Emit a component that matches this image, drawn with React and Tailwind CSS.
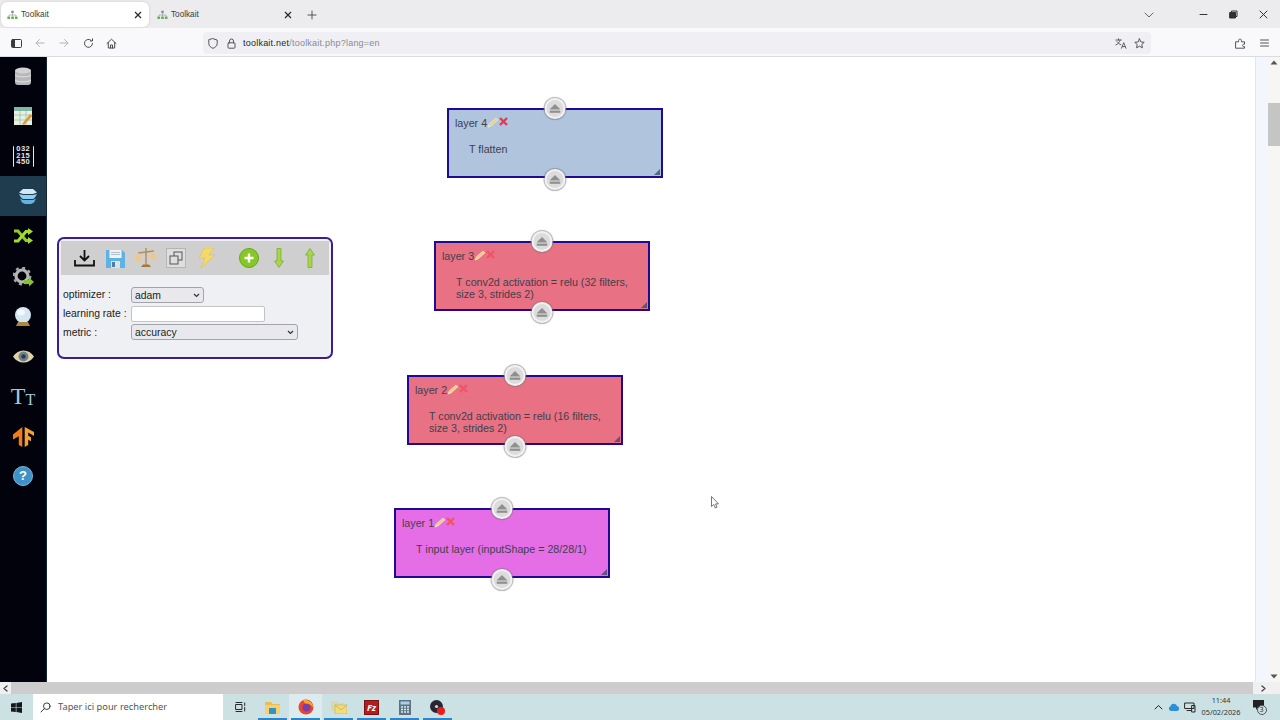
import React from "react";

const arial = "font-['Liberation_Sans',Arial,sans-serif]";

function Favicon() {
  return (
    <svg width="11" height="10" viewBox="0 0 14 12" className="shrink-0">
      <rect x="5.5" y="0.5" width="3" height="3" fill="#7c8f9c" />
      <path d="M7 3.5V6M2.5 8V6H11.5V8M7 6V8" stroke="#8a9a8a" strokeWidth="0.8" fill="none" />
      <rect x="0.5" y="8" width="3.4" height="3" fill="#5fae4f" />
      <rect x="5.3" y="8" width="3.4" height="3" fill="#5fae4f" />
      <rect x="10" y="8" width="3.4" height="3" fill="#5fae4f" />
    </svg>
  );
}

function Tab({ active, close }) {
  return (
    <div className={`h-[25px] flex items-center rounded-md pl-[6px] ${close} ${active ? "w-[148px] bg-white shadow-[0_0_3px_rgba(0,0,0,0.15)]" : "w-[148px]"}`}>
      <Favicon />
      <span className="ml-[3px] pt-[2px] text-[8.2px] text-[#3b3b40]">Toolkait</span>
      <svg width="8" height="8" viewBox="0 0 8 8" className="ml-auto mr-[7px]">
        <path d="M1 1L7 7M7 1L1 7" stroke="#26262b" strokeWidth="1.2" />
      </svg>
    </div>
  );
}

const Stroke = ({ w = 14, h = 14, vb = "0 0 14 14", c = "#4a4a50", sw = 1, children }) => (
  <svg width={w} height={h} viewBox={vb} fill="none" stroke={c} strokeWidth={sw} strokeLinecap="round" strokeLinejoin="round" className="shrink-0">
    {children}
  </svg>
);

function TabStrip() {
  return (
    <div className="h-[28px] bg-[#ececee] flex items-center pl-[1px] pt-[1px]">
      <Tab active close="" />
      <Tab close="ml-[2px]" />
      <div className="ml-[8px]">
        <Stroke w={10} h={10} vb="0 0 10 10" c="#55555a"><path d="M5 1V9M1 5H9" /></Stroke>
      </div>
      <div className="ml-auto flex items-center">
        <Stroke w={10} h={6} vb="0 0 10 6" c="#66666c"><path d="M1 1L5 5L9 1" /></Stroke>
        <div className="ml-[45px]"><Stroke w={9} h={9} vb="0 0 9 9" c="#333338"><path d="M1 4.5H8" /></Stroke></div>
        <div className="ml-[21px]">
          <Stroke w={9} h={9} vb="0 0 9 9" c="#2f2f34"><path d="M2.5 2.5V1H8V6.5H6.5" /><rect x="1" y="2.5" width="5.5" height="5.5" fill="#2f2f34" /></Stroke>
        </div>
        <div className="ml-[21px] mr-[12px]"><Stroke w={9} h={9} vb="0 0 9 9" c="#2f2f34"><path d="M1 1L8 8M8 1L1 8" /></Stroke></div>
      </div>
    </div>
  );
}

function Toolbar() {
  return (
    <div className="h-[29px] bg-[#f9f9fb] flex items-center border-b border-[#dcdce0] shrink-0 pt-[2px]">
      <div className="ml-[11px]">
        <Stroke w={11} h={9} vb="0 0 11 9" c="#3a3a40"><rect x="0.5" y="0.5" width="10" height="8" rx="1" /><rect x="1" y="1" width="3" height="7" fill="#3a3a40" stroke="none" /></Stroke>
      </div>
      <div className="ml-[13px]"><Stroke w={10} h={10} vb="0 0 10 10" c="#b4b4b9"><path d="M9 5H1M4.5 1.5L1 5L4.5 8.5" /></Stroke></div>
      <div className="ml-[14px]"><Stroke w={10} h={10} vb="0 0 10 10" c="#b4b4b9"><path d="M1 5H9M5.5 1.5L9 5L5.5 8.5" /></Stroke></div>
      <div className="ml-[14px]"><Stroke w={11} h={11} vb="0 0 11 11" c="#4a4a50"><path d="M9.5 5.5A4 4 0 1 1 8 2.2M9.5 0.8V3H7.3" /></Stroke></div>
      <div className="ml-[12px]"><Stroke w={11} h={11} vb="0 0 11 11" c="#4a4a50"><path d="M1 5.5L5.5 1.2L10 5.5M2.3 4.5V10H8.7V4.5M4.5 10V7H6.5V10" /></Stroke></div>
      <div className="ml-[86px] w-[948px] h-[22px] bg-[#f0f0f4] rounded-[4px] flex items-center pl-[5px]">
        <Stroke w={10} h={11} vb="0 0 10 11" c="#55555a"><path d="M5 0.7L9.2 2V5.5C9.2 8 7 9.6 5 10.3C3 9.6 0.8 8 0.8 5.5V2Z" /></Stroke>
        <div className="ml-[9px]">
          <Stroke w={9} h={11} vb="0 0 9 11" c="#55555a"><rect x="1" y="4.8" width="7" height="5.4" rx="0.8" /><path d="M2.5 4.8V3A2 2 0 0 1 6.5 3V4.8" /></Stroke>
        </div>
        <span className="ml-[7px] pt-[1px] text-[9px] text-[#1f1f24] tracking-[0.025em]">toolkait.net<span className="text-[#8a8a90]">/toolkait.php?lang=en</span></span>
        <div className="ml-auto flex items-center mr-[6px]">
          <Stroke w={12} h={11} vb="0 0 12 11" c="#55555a" sw={0.9}><path d="M0.8 2H6.2M3.5 0.7V2M5.2 2C4.8 4 3 6 0.8 7M2 3.6C3 5.2 4.4 6.2 5.8 6.7M6.5 10.3L8.7 4.7L10.9 10.3M7.3 8.6H10.1" /></Stroke>
          <div className="ml-[7px]"><Stroke w={11} h={11} vb="0 0 11 11" c="#55555a"><path d="M5.5 0.9L6.9 3.9L10.2 4.3L7.8 6.5L8.4 9.8L5.5 8.2L2.6 9.8L3.2 6.5L0.8 4.3L4.1 3.9Z" /></Stroke></div>
        </div>
      </div>
      <div className="ml-[84px]"><Stroke w={11} h={11} vb="0 0 11 11" c="#55555a"><path d="M1 3.8H3.6C3.4 2 4 1 5 1S6.6 2 6.4 3.8H9.5V6.2C8.2 6 7.6 6.6 7.6 7.4S8.2 8.8 9.5 8.6V10.2H1Z" /></Stroke></div>
      <div className="ml-[14px]"><Stroke w={9} h={8} vb="0 0 9 8" c="#55555a"><path d="M0.5 1H8.5M0.5 4H8.5M0.5 7H8.5" /></Stroke></div>
    </div>
  );
}

function SideIcon({ children, active, nudge }) {
  return <div className={`h-[40px] flex items-center justify-center ${active ? "bg-[#1e3c4d]" : ""} ${nudge ? "pt-[2px]" : ""}`}>{children}</div>;
}

function MatrixIcon() {
  return (
    <div className="relative w-[21px] h-[21px] border-x-[1.5px] border-[#e8e8e8] rounded-[1px] flex items-center justify-center">
      <div className="grid grid-cols-3 gap-x-[0.5px] text-[7.5px] leading-[6.8px] font-bold text-[#e6e6e6] text-center">
        <span>0</span><span>3</span><span>2</span>
        <span>2</span><span>1</span><span>5</span>
        <span>4</span><span>5</span><span>0</span>
      </div>
    </div>
  );
}

function Sidebar() {
  return (
    <div className="w-[47px] shrink-0 bg-[#02020c] flex flex-col border-r border-[#16263a] overflow-hidden">
      <div className="-mt-[1px] flex flex-col">
        <SideIcon nudge>
          <svg width="16" height="20" viewBox="0 0 16 20">
            <rect x="0" y="2" width="16" height="16" rx="3" fill="#b8b8bb" />
            <ellipse cx="8" cy="3.5" rx="8" ry="3" fill="#d2d2d4" />
            <path d="M0 8C3 10.5 13 10.5 16 8M0 13C3 15.5 13 15.5 16 13" stroke="#e4e4e6" fill="none" />
          </svg>
        </SideIcon>
        <SideIcon>
          <svg width="19" height="19" viewBox="0 0 19 19">
            <rect x="0" y="0" width="18" height="18" fill="#e8f1df" />
            <rect x="0" y="0" width="18" height="4" fill="#7fb7a6" />
            <path d="M0 8H18M0 13H18M6 4V18M12 4V18" stroke="#9cc2b4" strokeWidth="0.8" />
            <path d="M8 17L16 7L18.5 9L10 18Z" fill="#dc9a3c" />
          </svg>
        </SideIcon>
        <SideIcon><MatrixIcon /></SideIcon>
        <SideIcon active>
          <svg width="20" height="15" viewBox="0 0 20 15" className="ml-[10px]">
            <path d="M5 0H15L19 3.5L15 5H5L1 3.5Z" fill="#cfe9f8" />
            <path d="M1 5L5 6H15L19 5L17 8.5L15 10H5L3 8.5Z" fill="#92cdf0" />
            <path d="M2 9.5L5 11H15L18 9.5L16 13.5L13 15H7L4 13.5Z" fill="#66b1e4" />
          </svg>
        </SideIcon>
        <SideIcon>
          <svg width="20" height="16" viewBox="0 0 20 16" fill="none">
            <path d="M1 3H5L13 12.5H16" stroke="#8fce20" strokeWidth="3" />
            <path d="M1 13H5L13 3.5H16" stroke="#a4dc2e" strokeWidth="3" />
            <path d="M15 0L20 3.5L15 7ZM15 9L20 12.5L15 16Z" fill="#a4dc2e" />
          </svg>
        </SideIcon>
        <SideIcon nudge>
          <svg width="21" height="20" viewBox="0 0 21 20">
            <circle cx="9" cy="9" r="6" fill="none" stroke="#b5b5b5" strokeWidth="3.2" />
            <circle cx="9" cy="9" r="8.3" fill="none" stroke="#a8a8a8" strokeWidth="2.2" strokeDasharray="3 3.5" />
            <path d="M11 13H16V10.5L21 15L16 19.5V17H11Z" fill="#86c232" />
          </svg>
        </SideIcon>
        <SideIcon nudge>
          <svg width="18" height="20" viewBox="0 0 18 20">
            <circle cx="9" cy="8" r="8" fill="#d5e5f2" />
            <ellipse cx="7" cy="5.5" rx="4" ry="3" fill="#f3f8fc" />
            <path d="M4 15H14L16 19H2Z" fill="#a98a45" />
          </svg>
        </SideIcon>
        <SideIcon>
          <svg width="21" height="13" viewBox="0 0 21 13">
            <path d="M0 6.5C5 -1.5 16 -1.5 21 6.5C16 14.5 5 14.5 0 6.5Z" fill="#e3d3a4" />
            <circle cx="10.5" cy="6.5" r="5" fill="#6d8490" />
            <circle cx="10.5" cy="6.5" r="2.2" fill="#2f3b44" />
          </svg>
        </SideIcon>
        <SideIcon>
          <span className="font-['Liberation_Serif',serif] text-[#9fcadb] leading-none flex items-end">
            <span className="text-[24px]">T</span><span className="text-[16px]">T</span>
          </span>
        </SideIcon>
        <SideIcon nudge>
          <svg width="21" height="20" viewBox="0 0 21 20">
            <path d="M9.3 0V20L5.8 18V9.2L0 12.5V7.5Z" fill="#ee7c18" />
            <path d="M11.7 0V20L15.2 18V12.7L18 14.3V10.3L15.2 8.7V5.6L21 9V5Z" fill="#f5a030" />
          </svg>
        </SideIcon>
        <SideIcon>
          <div className="w-[20px] h-[20px] rounded-full bg-[#3f92c8] border border-[#7bb8dd] flex items-center justify-center text-white text-[13px] font-bold">?</div>
        </SideIcon>
      </div>
    </div>
  );
}

function Handle({ className }) {
  return (
    <div className={`absolute left-1/2 -translate-x-1/2 w-[21px] h-[21px] rounded-full bg-[#dcdcdc] border-2 border-[#f2f2f2] shadow-[0_0_1px_1px_rgba(120,120,120,0.55)] flex items-center justify-center ${className}`}>
      <svg width="11" height="9" viewBox="0 0 11 9">
        <path d="M5.5 0L11 5.5H0Z" fill="#8f8f8f" />
        <rect x="0" y="6.6" width="11" height="2.2" fill="#8f8f8f" />
      </svg>
    </div>
  );
}

function Layer({ name, text, bg, left, top, red }) {
  return (
    <div className={`absolute w-[216px] h-[70px] border-2 border-[#1f0a96] ${bg} text-[#40404c] text-[10.7px] leading-[12px]`} style={{ left, top }}>
      <div className="flex items-center pl-[6px] pt-[4.5px] h-[21px]">
        <span>{name}</span>
        <svg width="12" height="11" viewBox="0 0 12 11" className="-ml-[0.5px]">
          <path d="M1 10L2.2 7L9 1L11 2.8L4 9Z" fill="#ead27a" stroke="#fff" strokeWidth="0.5" />
        </svg>
        <svg width="9" height="9" viewBox="0 0 9 9" className="ml-[0.5px] -mt-[2px]">
          <path d="M1 1L8 8M8 1L1 8" stroke={red} strokeWidth="2.4" />
        </svg>
      </div>
      <div className="pl-[20px] pr-[20px] mt-[12px]">{text}</div>
      <svg width="6" height="6" viewBox="0 0 6 6" className="absolute right-[1px] bottom-[1px]">
        <path d="M6 0V6H0Z" fill="#3b4a5a" opacity="0.75" />
      </svg>
      <Handle className="-top-[12px]" />
      <Handle className="-bottom-[14px]" />
    </div>
  );
}

function ToolIcon({ children, className = "" }) {
  return <div className={`w-[30.7px] flex justify-center ${className}`}>{children}</div>;
}

function Chevron() {
  return (
    <svg width="7" height="5" viewBox="0 0 7 5" fill="none" stroke="#333" strokeWidth="1.2" className="absolute right-[4px] top-[6px] pointer-events-none">
      <path d="M1 1L3.5 3.5L6 1" />
    </svg>
  );
}

function Panel() {
  return (
    <div className="absolute left-[10px] top-[180px] w-[276px] h-[122px] rounded-[7px] border-2 border-[#3a1f8c] bg-[#eff0f3] p-[2px] text-[10.4px] text-[#222]">
      <div className="h-[34px] bg-[#cfcfcf] flex items-center pl-[8px]">
        <ToolIcon>
          <svg width="21" height="18" viewBox="0 0 21 18" fill="none" stroke="#111" strokeWidth="1.8">
            <path d="M10.5 1V11M6 7L10.5 11.5L15 7M1 11V16.5H20V11" />
          </svg>
        </ToolIcon>
        <ToolIcon>
          <svg width="19" height="19" viewBox="0 0 19 19">
            <path d="M0 1H16L19 4V19H0Z" fill="#5fb2e4" />
            <rect x="3.5" y="1" width="12" height="8" fill="#eef3f6" />
            <path d="M5 3.5H14M5 5.5H14" stroke="#a0b0bb" strokeWidth="0.8" />
            <rect x="5" y="12" width="9" height="7" fill="#d9e2e8" />
            <rect x="6" y="13" width="3" height="5" fill="#4b7fa6" />
          </svg>
        </ToolIcon>
        <ToolIcon>
          <svg width="22" height="20" viewBox="0 0 22 20" fill="none">
            <path d="M11 0V17M3 5L19 3" stroke="#b58e52" strokeWidth="1.4" />
            <path d="M0 11L3.5 5L7 11C6 14 1 14 0 11ZM15 9.5L18.5 3.5L22 9.5C21 12.5 16 12.5 15 9.5Z" fill="#edc989" />
            <path d="M6 19H16L14 16.5H8Z" fill="#a8763c" />
          </svg>
        </ToolIcon>
        <ToolIcon>
          <div className="w-[20px] h-[20px] bg-[#dedede] border border-[#b5b5b5] flex items-center justify-center">
            <svg width="14" height="14" viewBox="0 0 14 14" fill="none" stroke="#555" strokeWidth="1">
              <rect x="5" y="1" width="8" height="8" />
              <rect x="1" y="5" width="8" height="8" fill="#dedede" />
            </svg>
          </div>
        </ToolIcon>
        <ToolIcon>
          <svg width="16" height="20" viewBox="0 0 16 20">
            <path d="M5 0H15L10 7H16L2 20L6 10H0Z" fill="#f3d968" stroke="#e0b94a" strokeWidth="0.5" />
          </svg>
        </ToolIcon>
        <ToolIcon className="ml-[11px]">
          <div className="w-[20px] h-[20px] rounded-full bg-[#86c926] border border-[#6aa518] flex items-center justify-center">
            <svg width="10" height="10" viewBox="0 0 10 10"><path d="M5 0.5V9.5M0.5 5H9.5" stroke="#fff" strokeWidth="2.4" /></svg>
          </div>
        </ToolIcon>
        <ToolIcon>
          <svg width="10" height="20" viewBox="0 0 10 20"><path d="M3 0.5H7V13H9.5L5 19.5L0.5 13H3Z" fill="#a8d64a" stroke="#74a82a" strokeWidth="0.7" /></svg>
        </ToolIcon>
        <ToolIcon>
          <svg width="10" height="20" viewBox="0 0 10 20"><path d="M3 19.5H7V7H9.5L5 0.5L0.5 7H3Z" fill="#a8d64a" stroke="#74a82a" strokeWidth="0.7" /></svg>
        </ToolIcon>
      </div>
      <div className="grid grid-cols-[68px_auto] justify-start items-center gap-y-[2.7px] pl-[2px] pt-[12px]">
        <span>optimizer :</span>
        <div className="relative w-[73px] h-[16px]">
          <select defaultValue="adam" className="appearance-none w-full h-full bg-[#e9e9ed] border border-[#a3a3ad] rounded-[3px] text-[10.4px] pl-[3px] text-[#222]">
            <option>adam</option>
          </select>
          <Chevron />
        </div>
        <span>learning rate :</span>
        <input className="w-[134px] h-[16px] bg-white border border-[#c4c4c4] rounded-[2px]" />
        <span>metric :</span>
        <div className="relative w-[167px] h-[16px]">
          <select defaultValue="accuracy" className="appearance-none w-full h-full bg-[#e9e9ed] border border-[#a3a3ad] rounded-[3px] text-[10.4px] pl-[3px] text-[#222]">
            <option>accuracy</option>
          </select>
          <Chevron />
        </div>
      </div>
    </div>
  );
}

function Cursor() {
  return (
    <svg width="8" height="13" viewBox="0 0 8 13" className="absolute left-[664px] top-[439px]">
      <path d="M0.5 0.5V10.5L2.8 8.5L4.3 12L6 11.2L4.5 7.9H7.5Z" fill="#fff" stroke="#555" strokeWidth="0.8" />
    </svg>
  );
}

function Canvas() {
  return (
    <div className="relative flex-1 bg-white overflow-hidden">
      <Panel />
      <Layer name="layer 4" text="T flatten" bg="bg-[#b0c4de]" left={400} top={51} red="#e8384f" />
      <Layer name="layer 3" text="T conv2d activation = relu (32 filters, size 3, strides 2)" bg="bg-[#e87183]" left={387} top={184} red="#ee5568" />
      <Layer name="layer 2" text="T conv2d activation = relu (16 filters, size 3, strides 2)" bg="bg-[#e87183]" left={360} top={318} red="#ee5568" />
      <Layer name="layer 1" text="T input layer (inputShape = 28/28/1)" bg="bg-[#e56ee6]" left={347} top={451} red="#ee5568" />
      <Cursor />
    </div>
  );
}

function VScroll() {
  return (
    <div className="w-[25px] shrink-0 flex border-l border-[#e3e5e8] bg-white">
      <div className="w-[12px] bg-[#f3f6fc]"></div>
      <div className="flex-1 bg-[#f7f6f3] flex flex-col items-center pt-[3px] pb-[3px]">
        <svg width="8" height="5" viewBox="0 0 8 5"><path d="M4 0.5L7.5 4.5H0.5Z" fill="#555" /></svg>
        <div className="w-full h-[43px] bg-[#c5c6c3] mt-[38px]"></div>
        <svg width="8" height="5" viewBox="0 0 8 5" className="mt-auto"><path d="M4 4.5L7.5 0.5H0.5Z" fill="#555" /></svg>
      </div>
    </div>
  );
}

function HScroll() {
  return (
    <div className="h-[12px] bg-[#cdcdcd] flex items-center justify-between shrink-0">
      <div className="w-[11px] h-[12px] bg-[#f0f0f0] flex items-center justify-center">
        <Stroke w={5} h={7} vb="0 0 5 7" c="#444" sw={1.3}><path d="M4 1L1 3.5L4 6" /></Stroke>
      </div>
      <div className="w-[27px] h-[12px] bg-[#f0f0f0] flex items-center justify-start pl-[8px]">
        <Stroke w={5} h={7} vb="0 0 5 7" c="#444" sw={1.3}><path d="M1 1L4 3.5L1 6" /></Stroke>
      </div>
    </div>
  );
}

function TaskItem({ children, active, open = true }) {
  return (
    <div className={`relative w-[33px] h-[26px] flex items-center justify-center ${active ? "bg-[#dcebed]" : ""}`}>
      {children}
      {open && <div className="absolute bottom-0 left-[2px] right-[2px] h-[2px] bg-[#2a86c8]"></div>}
    </div>
  );
}

function Taskbar() {
  return (
    <div className="h-[26px] bg-[#cbe1e4] flex items-center shrink-0 font-['Noto_Sans','Open_Sans',sans-serif]">
      <div className="w-[33px] flex justify-center pr-[1px]">
        <svg width="11" height="11" viewBox="0 0 11 11"><path d="M0 1.6L4.8 1V5.2H0ZM5.4 0.9L11 0V5.2H5.4ZM0 5.8H4.8V10L0 9.4ZM5.4 5.8H11V11L5.4 10.1Z" fill="#14181c" /></svg>
      </div>
      <div className="w-[190px] h-[26px] bg-white flex items-center pl-[7px]">
        <Stroke w={11} h={11} vb="0 0 11 11" c="#3a3a3a"><circle cx="6.8" cy="4.2" r="3.3" /><path d="M4.4 6.6L1 10" /></Stroke>
        <span className="ml-[7px] text-[9.3px] text-[#555]">Taper ici pour rechercher</span>
      </div>
      <div className="ml-[6px] w-[22px] flex justify-center -mr-[1px]">
        <Stroke w={11} h={10} vb="0 0 11 10" c="#2a2a2a"><rect x="1" y="2.5" width="6" height="5" /><path d="M1 0.5H7M1 9.5H7M9.7 1V3.5M9.7 5.5V9" /></Stroke>
      </div>
      <div className="ml-[6px] flex">
        <TaskItem>
          <svg width="15" height="13" viewBox="0 0 15 13"><path d="M0 1H6L7.5 3H15V5H0Z" fill="#e9bd4e" /><rect x="0" y="4" width="15" height="9" fill="#f4d06f" /><rect x="4" y="7" width="7" height="6" fill="#2f96c4" /></svg>
        </TaskItem>
        <TaskItem active>
          <svg width="16" height="16" viewBox="0 0 16 16"><circle cx="8" cy="8" r="7.5" fill="#e8452f" /><circle cx="8.5" cy="8.5" r="4" fill="#7a3ea8" /><path d="M5 1C9 0 15 3 15.5 9C14 6 10 4 7 4.5Z" fill="#f9a825" /></svg>
        </TaskItem>
        <TaskItem>
          <svg width="16" height="14" viewBox="0 0 16 14"><path d="M0 1H6L7 3H13V11H0Z" fill="#dcd7a6" /><rect x="4" y="5" width="12" height="9" fill="#f3dc7b" stroke="#bfa650" strokeWidth="0.5" /><path d="M4 5L10 10L16 5" fill="none" stroke="#bfa650" strokeWidth="0.7" /></svg>
        </TaskItem>
        <TaskItem>
          <div className="w-[15px] h-[15px] bg-[#b51d1d] border border-[#7d1010] flex items-center justify-center text-white text-[9px] font-bold italic leading-none">Fz</div>
        </TaskItem>
        <TaskItem>
          <svg width="12" height="15" viewBox="0 0 12 15"><rect width="12" height="15" fill="#5c7486" /><rect x="1.5" y="1.5" width="9" height="3" fill="#a9d0e8" /><path d="M2 7H4M5 7H7M8 7H10M2 9.5H4M5 9.5H7M8 9.5H10M2 12H4M5 12H7M8 12H10" stroke="#e2e8ec" strokeWidth="1.4" /></svg>
        </TaskItem>
        <TaskItem>
          <svg width="15" height="15" viewBox="0 0 15 15"><circle cx="6.5" cy="6.5" r="6.5" fill="#252830" /><circle cx="6.5" cy="6.5" r="1.6" fill="#d8d8d8" /><circle cx="11" cy="11" r="4" fill="#ea1c1c" /></svg>
        </TaskItem>
      </div>
      <div className="ml-auto flex items-center text-[#2a2a2a]">
        <Stroke w={9} h={6} vb="0 0 9 6" c="#222"><path d="M1 5L4.5 1.5L8 5" /></Stroke>
        <svg width="12" height="8" viewBox="0 0 12 8" className="ml-[5.5px]"><path d="M3 8A2.5 2.5 0 0 1 2.5 3.2C3.5 0 8 0 9 3A2.6 2.6 0 0 1 9.5 8Z" fill="#2d8fd8" /></svg>
        <div className="ml-[4px]"><Stroke w={12} h={11} vb="0 0 12 11" c="#2a2a2a"><rect x="1" y="1" width="9" height="5.5" /><path d="M3 8.5H7M8 3.5H11V10H8Z" /></Stroke></div>
        <div className="ml-[5px] -mt-[2px] w-[40px] flex flex-col items-center text-[7.3px] leading-[12.5px] text-[#333]">
          <span>11:44</span><span>05/02/2026</span>
        </div>
        <div className="relative ml-[11.5px] mr-[14.5px] w-[13px] h-[14px]">
          <svg width="11" height="10" viewBox="0 0 11 10" className="absolute left-0 top-0"><path d="M0 0H11V7.5H5L3 10V7.5H0Z" fill="#222" /></svg>
          <div className="absolute left-[4px] top-[5px] w-[10px] h-[10px] rounded-full border border-[#555] bg-[#cbe1e4] text-[7px] leading-[8px] text-center">3</div>
        </div>
      </div>
    </div>
  );
}

export default function App() {
  return (
    <div className={`w-[1280px] h-[720px] overflow-hidden flex flex-col ${arial}`}>
      <TabStrip />
      <Toolbar />
      <div className="flex-1 flex min-h-0">
        <Sidebar />
        <Canvas />
        <VScroll />
      </div>
      <HScroll />
      <Taskbar />
    </div>
  );
}
